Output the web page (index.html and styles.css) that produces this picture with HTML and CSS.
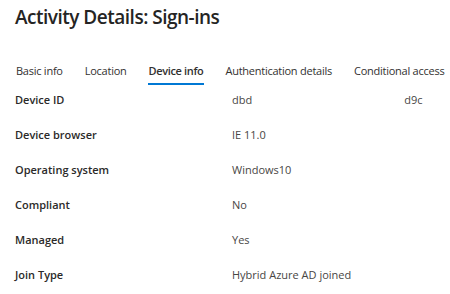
FILE: index.html
```html
<!DOCTYPE html>
<html lang="en">
<head>
    <meta charset="UTF-8">
    <title>Activity Details: Sign-ins</title>
    <link rel="stylesheet" href="styles.css">
</head>
<body>
    <div class="panel">
        <h1>Activity Details: Sign-ins</h1>

        <!-- tabs -->
        <div class="tabs">
            <span class="tab">Basic info</span>
            <span class="tab">Location</span>
            <span class="tab active">Device info</span>
            <span class="tab">Authentication details</span>
            <span class="tab">Conditional access</span>
        </div>

        <!-- device details -->
        <div class="details">
            <div class="label">Device ID</div>
            <div class="value split"><span>dbd</span><span>d9c</span></div>
            <div class="label">Device browser</div>
            <div class="value">IE 11.0</div>
            <div class="label">Operating system</div>
            <div class="value">Windows10</div>
            <div class="label">Compliant</div>
            <div class="value">No</div>
            <div class="label">Managed</div>
            <div class="value">Yes</div>
            <div class="label">Join Type</div>
            <div class="value">Hybrid Azure AD joined</div>
        </div>
    </div>
</body>
</html>
```

FILE: styles.css
```css
body {
    margin: 0;
    background: #fff;
    font-family: 'Open Sans', 'Noto Sans', sans-serif;
    color: #252423;
    overflow: hidden;
}

.panel {
    padding: 4px 0 0 15px;
}

/* title */
h1 {
    margin: 0;
    font-size: 19px;
    font-weight: 600;
    line-height: 26px;
    letter-spacing: -0.5px;
}

/* tabs */
.tabs {
    display: flex;
    gap: 20px;
    margin-top: 30px;
    margin-bottom: 2px;
}
.tab {
    padding: 3px 1px 4px;
    font-size: 11px;
    line-height: 16px;
    letter-spacing: -0.25px;
    color: #323130;
    border-bottom: 2px solid transparent;
    white-space: nowrap;
}
.tab.active {
    font-weight: 600;
    letter-spacing: -0.35px;
    border-bottom-color: #0078d4;
}

/* details grid */
.details {
    display: grid;
    grid-template-columns: 217px 1fr;
    grid-auto-rows: 35px;
    font-size: 11px;
    line-height: 16px;
}
.label {
    font-weight: 600;
    color: #2b2a29;
    padding-top: 5px;
}
.value {
    color: #484644;
    padding-top: 5px;
}
.value.split {
    display: flex;
    gap: 152px;
}
```
